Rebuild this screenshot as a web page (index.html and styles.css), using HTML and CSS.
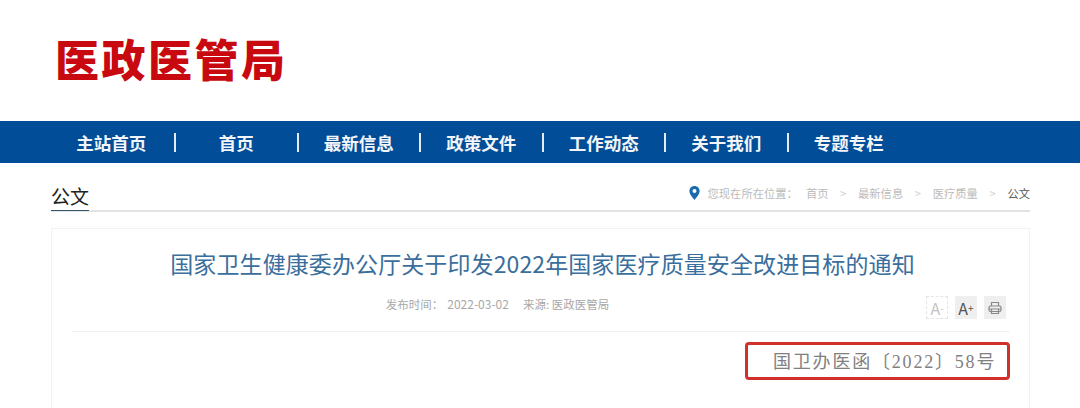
FILE: index.html
```html
<!DOCTYPE html>
<html lang="zh-CN">
<head>
    <meta charset="UTF-8">
    <title>公文</title>
    <link rel="stylesheet" href="styles.css">
</head>
<body>
    <div class="logo">医政医管局</div>

    <!-- Nav -->
    <nav class="nav">
        <a class="nav-item">主站首页</a><i class="nav-sep"></i>
        <a class="nav-item">首页</a><i class="nav-sep"></i>
        <a class="nav-item">最新信息</a><i class="nav-sep"></i>
        <a class="nav-item">政策文件</a><i class="nav-sep"></i>
        <a class="nav-item">工作动态</a><i class="nav-sep"></i>
        <a class="nav-item">关于我们</a><i class="nav-sep"></i>
        <a class="nav-item">专题专栏</a>
    </nav>

    <div class="main">
        <div class="section-head">
            <h2 class="section-title">公文</h2>
            <div class="crumbs">
                <svg class="pin" width="11" height="14" viewBox="0 0 11 14">
                    <path fill="#1a6bad" fill-rule="evenodd" d="M5.5 0C2.5 0 .4 2.2.4 5c0 3.400 3.500 6.800 5.100 9 1.600-2.200 5.100-5.600 5.100-9 0-2.800-2.100-5-5.100-5zm0 3.100a2 2 0 1 1 0 4 2 2 0 0 1 0-4z"/>
                </svg>
                <span class="crumb first">您现在所在位置：</span>
                <span class="crumb">首页</span><span class="arrow">&gt;</span>
                <span class="crumb">最新信息</span><span class="arrow">&gt;</span>
                <span class="crumb">医疗质量</span><span class="arrow">&gt;</span>
                <span class="crumb current">公文</span>
            </div>
        </div>

        <div class="card">
            <h1 class="title">国家卫生健康委办公厅关于印发2022年国家医疗质量安全改进目标的通知</h1>
            <div class="meta-row">
                <div class="meta">
                    <span>发布时间：</span><span class="date">2022-03-02</span><span>来源: 医政医管局</span>
                </div>
                <div class="tools">
                    <span class="tool dashed">A<sup>-</sup></span>
                    <span class="tool dark">A<sup>+</sup></span>
                    <span class="tool">
                        <svg width="14" height="14" viewBox="0 0 14 14" fill="none" stroke="#888" stroke-width="1.200">
                            <path d="M3.500 5V1.500h7V5"/>
                            <rect x="1" y="5" width="12" height="5.500" rx="1.500"/>
                            <path d="M1 8h12M3.500 8v4.500h7V8"/>
                        </svg>
                    </span>
                </div>
            </div>
            <div class="doc-row">
                <div class="doc-no">国卫办医函〔2022〕58号</div>
            </div>
        </div>
    </div>
</body>
</html>
```

FILE: styles.css
```css
* {
    box-sizing: border-box;
}
html, body {
    height: 408px;
    overflow: hidden;
}
body {
    margin: 0;
    background: #fff;
    font-family: "Noto Sans CJK SC", "Noto Sans", sans-serif;
}
.logo {
    height: 121px;
    padding: 27px 0 0 55px;
    color: #c8090f;
    font-size: 44px;
    font-weight: 900;
    letter-spacing: 2.500px;
    line-height: 62px;
}
.nav {
    display: flex;
    align-items: center;
    height: 42px;
    padding-left: 53.500px;
    background: #014d97;
}
.nav-item {
    flex: 0 0 120.500px;
    text-align: center;
    color: #f2f5f9;
    font-size: 17.500px;
    font-weight: 700;
}
.nav-item:first-child {
    padding-right: 5px;
}
.nav-sep {
    flex: 0 0 2px;
    height: 19px;
    background: #e4ebf3;
}
.main {
    margin: 0 50px 0 51px;
}
.section-head {
    display: flex;
    justify-content: space-between;
    align-items: flex-end;
    height: 49px;
    border-bottom: 2px solid #e3e3e3;
}
.section-title {
    margin: 0 0 -1px;
    height: 32px;
    width: 38px;
    border-bottom: 1px solid #35586f;
    color: #222;
    font-size: 19px;
    font-weight: 400;
    line-height: 34px;
}
.crumbs {
    display: flex;
    align-items: center;
    height: 28px;
    margin-bottom: 3px;
    color: #bbb;
    font-size: 11.300px;
}
.pin {
    margin-right: 7px;
}
.crumb.first {
    margin-right: 8px;
}
.arrow {
    width: 29.500px;
    text-align: center;
    color: #d0d0d0;
}
.crumb.current {
    color: #555;
}
.card {
    height: 190px;
    margin-top: 16px;
    padding: 0 19px 0 20px;
    border: 1px solid #f2f2f2;
}
.title {
    margin: 0;
    padding: 16px 0 0 3px;
    height: 57px;
    text-align: center;
    color: #3a6e9c;
    font-size: 23px;
    font-weight: 400;
    letter-spacing: 0.100px;
    line-height: 36px;
}
.meta-row {
    position: relative;
    height: 46px;
    border-bottom: 1px solid #f0f0f0;
}
.meta {
    display: flex;
    justify-content: center;
    padding: 9px 87px 0 0;
    color: #a8a8a8;
    font-size: 11.500px;
    line-height: 18px;
}
.date {
    margin: 0 14px 0 4px;
    font-size: 12px;
}
.tools {
    position: absolute;
    right: 4px;
    top: 10px;
    display: flex;
    gap: 7px;
}
.tool {
    display: flex;
    align-items: center;
    justify-content: center;
    width: 22px;
    height: 23px;
    background: #efefef;
    color: #555;
    font-size: 16px;
}
.tool sup {
    font-size: 10px;
    line-height: 0;
}
.tool.dashed {
    background: #fff;
    border: 1px dashed #e4e4e4;
    color: #c4c4c4;
}
.doc-row {
    display: flex;
    justify-content: flex-end;
    padding-top: 10px;
}
.doc-no {
    width: 265px;
    height: 38px;
    padding-left: 25px;
    border: 3px solid #d2302a;
    border-radius: 4px;
    color: #808080;
    font-family: "Liberation Serif", "Noto Sans CJK SC", serif;
    font-size: 18px;
    font-weight: 400;
    letter-spacing: 1.800px;
    line-height: 34px;
}
```
